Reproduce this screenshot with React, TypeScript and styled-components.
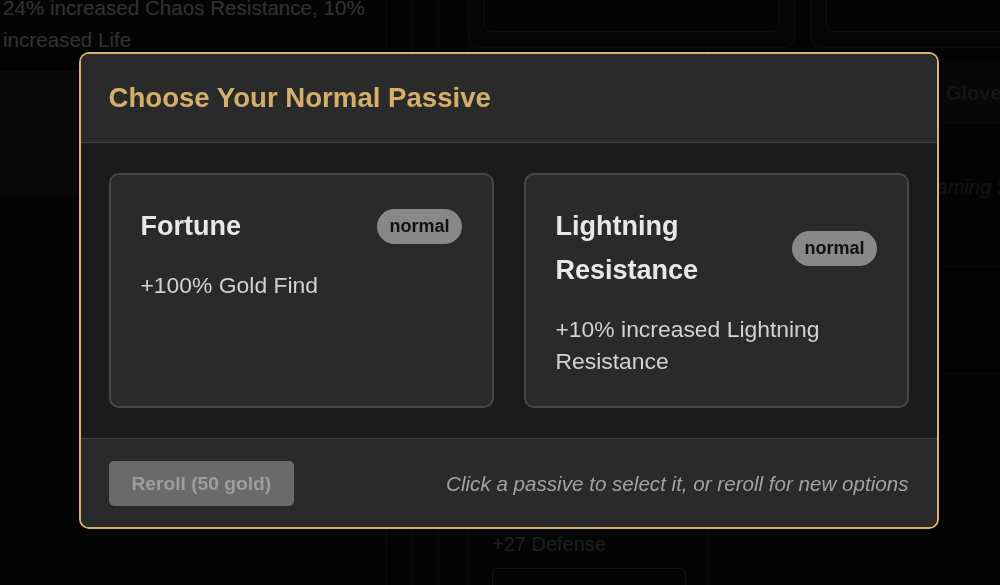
import React from "react";
import styled, { createGlobalStyle } from "styled-components";

const GlobalStyle = createGlobalStyle`
  html, body { margin: 0; padding: 0; background: #141414; }
  body { font-family: "Liberation Sans", Arial, sans-serif; overflow: hidden; }
  * { box-sizing: border-box; }
`;

/* ---------- Background app (under the overlay) ---------- */
const Scene = styled.div`
  display: grid;
  grid-template-columns: 386px 26px 26px 1fr;
  height: 585px;
  overflow: hidden;
  background: #141414;
`;

const LeftColumn = styled.div`
  display: flex;
  flex-direction: column;
`;

const StatText = styled.p`
  margin: -8px 0 0;
  padding: 0 0 0 3px;
  height: 80px;
  font-size: 20.6px;
  line-height: 32px;
  color: #e0e0e0;
  border-bottom: 1px solid #2e2e2e;
`;

const StatPanel = styled.div`
  height: 123px;
  background: #262626;
  border-bottom: 1px solid #2e2e2e;
`;

const Rule = styled.div`
  border-left: 1px solid #3a3a3a;
`;

const MainColumn = styled.div`
  border-left: 1px solid #3a3a3a;
  padding-left: 29px;
  display: flex;
  flex-direction: column;
`;

const SlotRow = styled.div`
  display: grid;
  grid-template-columns: 327px 1fr;
  gap: 15px;
  height: 48px;
  margin-right: -20px;
`;

const SlotCard = styled.div`
  border: 1px solid #3a3a3a;
  border-top: none;
  border-radius: 0 0 10px 10px;
  background: #1e1e1e;
  padding: 0 15px 15px;
  display: flex;
`;

const SlotInner = styled.div`
  flex: 1;
  border: 1px solid #444;
  border-top: none;
  border-radius: 0 0 8px 8px;
  background: #121212;
`;

const LowerArea = styled.div`
  flex: 1;
  display: grid;
  grid-template-columns: 240px 1fr;
  border-left: 1px solid #3a3a3a;
`;

const ItemColumn = styled.div`
  border-right: 1px solid #3a3a3a;
  padding: 480px 22px 0 23px;
  display: flex;
  flex-direction: column;
  gap: 8px;
`;

const DefenseText = styled.div`
  font-size: 20px;
  line-height: 32px;
  color: #6f9f6f;
`;

const ItemBox = styled.div`
  height: 40px;
  border: 1px solid #4a6a4a;
  border-radius: 6px;
`;

const DetailColumn = styled.div`
  padding: 14px 0 0 232px;
  display: flex;
  flex-direction: column;
`;

const DetailHead = styled.div`
  background: #222;
  padding: 20px 0 18px 5px;
  font-size: 20px;
  font-weight: bold;
  color: #606060;
  border-bottom: 1px solid #333;
`;

const DetailBody = styled.div`
  height: 143px;
  padding: 52px 0 0 0;
  font-size: 20px;
  font-style: italic;
  color: #5c5c5c;
  white-space: nowrap;
  text-indent: -20px;
  border-bottom: 1px solid #333;
`;

const DetailBlock = styled.div`
  height: 107px;
  border-bottom: 1px solid #333;
`;

/* ---------- Modal ---------- */
const Overlay = styled.div`
  position: fixed;
  inset: 0;
  background: rgba(0, 0, 0, 0.78);
  display: flex;
  align-items: center;
  justify-content: center;
  padding: 0 0 4px 17px;
`;

const Modal = styled.div`
  width: 860px;
  border: 2px solid #d3b474;
  border-radius: 10px;
  overflow: hidden;
  background: #1b1b1b;
`;

const Header = styled.div`
  background: #2a2a2a;
  padding: 28px 28px 28px;
  border-bottom: 1px solid #454545;
`;

const Title = styled.h2`
  margin: 0;
  font-size: 27.6px;
  font-weight: bold;
  color: #d4af6a;
  line-height: 32px;
`;

const Body = styled.div`
  padding: 30px 28px 30px 28px;
  display: grid;
  grid-template-columns: 1fr 1fr;
  gap: 30px;
`;

const Card = styled.div`
  background: #2a2a2a;
  border: 2px solid #474747;
  border-radius: 10px;
  padding: 29px 30px 27px;
  min-height: 235px;
  cursor: pointer;
`;

const CardHead = styled.div`
  display: flex;
  align-items: center;
  justify-content: space-between;
  gap: 20px;
  margin-bottom: 21px;
`;

const CardTitle = styled.h3`
  margin: 0;
  font-size: 27px;
  line-height: 44px;
  font-weight: bold;
  color: #e8e8e8;
`;

const Badge = styled.span`
  flex-shrink: 0;
  background: #888;
  color: #111;
  font-size: 18px;
  font-weight: bold;
  line-height: 27px;
  padding: 4px 12px;
  border-radius: 18px;
`;

const Desc = styled.p`
  margin: 0;
  font-size: 22.9px;
  line-height: 32px;
  color: #d2d2d2;
`;

const Footer = styled.div`
  background: #2a2a2a;
  border-top: 1px solid #454545;
  padding: 22px 28px 21px;
  display: flex;
  align-items: center;
  justify-content: space-between;
`;

const RerollButton = styled.button`
  height: 45px;
  padding: 0 23px;
  border: none;
  border-radius: 5px;
  background: #6a6a6a;
  color: #9e9e9e;
  font-family: "Liberation Sans", Arial, sans-serif;
  font-size: 19.2px;
  font-weight: bold;
`;

const Hint = styled.span`
  font-size: 20.6px;
  font-style: italic;
  color: #a2a2a2;
`;

const passives = [
  { name: "Fortune", rarity: "normal", desc: "+100% Gold Find" },
  {
    name: "Lightning Resistance",
    rarity: "normal",
    desc: "+10% increased Lightning Resistance",
  },
];

export default function App() {
  return (
    <>
      <GlobalStyle />
      <Scene>
        <LeftColumn>
          <StatText>24% increased Chaos Resistance, 10% increased Life</StatText>
          <StatPanel />
        </LeftColumn>
        <Rule />
        <Rule />
        <MainColumn>
          <SlotRow>
            <SlotCard>
              <SlotInner />
            </SlotCard>
            <SlotCard>
              <SlotInner />
            </SlotCard>
          </SlotRow>
          <LowerArea>
            <ItemColumn>
              <DefenseText>+27 Defense</DefenseText>
              <ItemBox />
            </ItemColumn>
            <DetailColumn>
              <DetailHead>Gloves</DetailHead>
              <DetailBody>Gaming Set</DetailBody>
              <DetailBlock />
            </DetailColumn>
          </LowerArea>
        </MainColumn>
      </Scene>
      <Overlay>
        <Modal>
          <Header>
            <Title>Choose Your Normal Passive</Title>
          </Header>
          <Body>
            {passives.map((p) => (
              <Card key={p.name}>
                <CardHead>
                  <CardTitle>{p.name}</CardTitle>
                  <Badge>{p.rarity}</Badge>
                </CardHead>
                <Desc>{p.desc}</Desc>
              </Card>
            ))}
          </Body>
          <Footer>
            <RerollButton disabled>Reroll (50 gold)</RerollButton>
            <Hint>Click a passive to select it, or reroll for new options</Hint>
          </Footer>
        </Modal>
      </Overlay>
    </>
  );
}
